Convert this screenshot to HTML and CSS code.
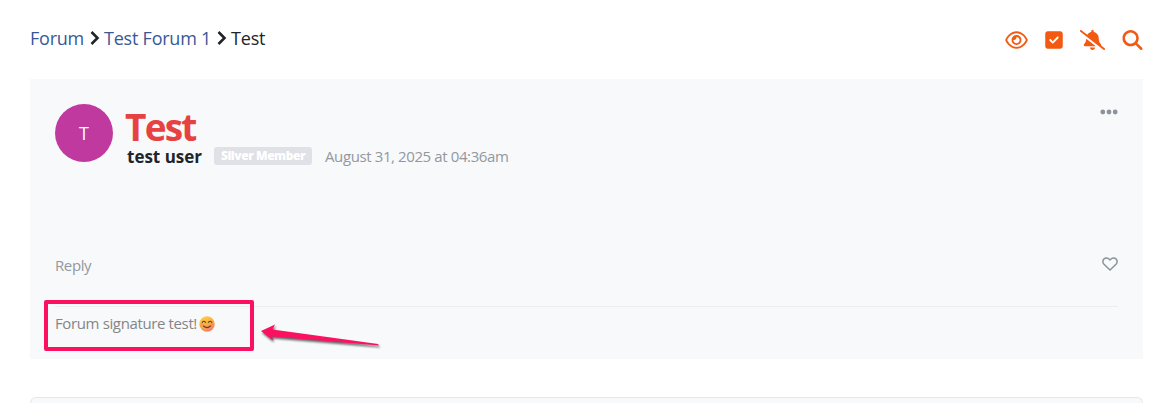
FILE: index.html
```html
<!DOCTYPE html>
<html lang="en">
<head>
<meta charset="utf-8">
<title>Test - Forum</title>
<link rel="stylesheet" href="styles.css">
</head>
<body>
<main class="page">
  <header class="topbar">
    <nav class="crumbs">
      <a class="crumb-forum" href="#">Forum</a>
      <svg class="chevron" viewBox="0 0 10 16"><path d="M1.500 2 7.500 8l-6 6"/></svg>
      <a class="crumb-sub" href="#">Test Forum 1</a>
      <svg class="chevron" viewBox="0 0 10 16"><path d="M1.500 2 7.500 8l-6 6"/></svg>
      <span class="crumb-current">Test</span>
    </nav>
    <div class="tools">
      <svg class="tool-eye" viewBox="0 0 576 512"><path fill="currentColor" d="M288 80c-65.200 0-118.800 29.600-159.900 67.700C89.600 183.500 63 226 49.400 256c13.600 30 40.200 72.500 78.600 108.300C169.200 402.400 222.800 432 288 432s118.800-29.600 159.900-67.700C486.400 328.500 513 286 526.600 256c-13.600-30-40.200-72.500-78.600-108.300C406.800 109.600 353.200 80 288 80zM95.400 112.600C142.500 68.800 207.200 32 288 32s145.500 36.800 192.600 80.600c46.800 43.500 78.100 95.400 93 131.100 3.300 7.900 3.300 16.700 0 24.600-14.900 35.700-46.200 87.700-93 131.100C433.500 443.200 368.800 480 288 480s-145.500-36.800-192.600-80.600C48.600 356 17.300 304 2.500 268.300c-3.300-7.900-3.300-16.700 0-24.600C17.300 208 48.600 156 95.400 112.600zM288 336c44.200 0 80-35.800 80-80s-35.800-80-80-80c-.7 0-1.300 0-2 0 1.300 5.100 2 10.500 2 16 0 35.300-28.700 64-64 64-5.500 0-10.900-.7-16-2 0 .7 0 1.300 0 2 0 44.200 35.800 80 80 80zm0-208a128 128 0 1 1 0 256 128 128 0 1 1 0-256z"/></svg>
      <svg class="tool-check" viewBox="0 0 448 512"><path fill="currentColor" d="M64 32C28.700 32 0 60.700 0 96v320c0 35.300 28.700 64 64 64h320c35.300 0 64-28.700 64-64V96c0-35.300-28.700-64-64-64H64zM337 209 209 337c-9.400 9.400-24.600 9.400-33.900 0l-64-64c-9.400-9.400-9.400-24.600 0-33.900s24.600-9.400 33.900 0l47 47L303 175c9.400-9.400 24.600-9.400 33.900 0s9.400 24.600 0 34z"/></svg>
      <svg class="tool-bell" viewBox="0 0 640 512"><path fill="currentColor" d="M38.800 5.100C28.400-3.100 13.300-1.200 5.100 9.200s-6.300 25.500 4.100 33.700l592 464c10.400 8.200 25.500 6.300 33.700-4.100s6.300-25.500-4.100-33.700l-90.200-70.700c.2-.4 .4-.9 .6-1.300 5.200-11.500 3.100-25-5.300-34.400l-7.400-8.300C497.300 319.200 480 273.800 480 226.800V208c0-77.400-55-142-128-156.800V32c0-17.700-14.300-32-32-32s-32 14.300-32 32v19.200c-42.600 8.600-79 34.200-102 69.300L38.800 5.100zM406.200 416 160 222.100v4.800c0 47-17.300 92.400-48.500 127.600l-7.400 8.300c-8.400 9.400-10.400 22.900-5.300 34.400S115.400 416 128 416h278.200zm-40.900 77.300c12-12 18.700-28.300 18.700-45.300H256c0 17 6.700 33.300 18.700 45.300S303 512 320 512s33.300-6.700 45.300-18.700z"/></svg>
      <svg class="tool-search" viewBox="0 0 512 512"><path fill="currentColor" d="M416 208c0 45.900-14.900 88.300-40 122.700l126.600 126.700c12.500 12.500 12.500 32.800 0 45.300s-32.800 12.500-45.300 0L330.700 376c-34.400 25.200-76.800 40-122.700 40C93.100 416 0 322.900 0 208S93.100 0 208 0s208 93.100 208 208zM208 352a144 144 0 1 0 0-288 144 144 0 1 0 0 288z"/></svg>
    </div>
  </header>

  <article class="post">
    <div class="post-head">
      <div class="avatar">T</div>
      <div class="post-info">
        <h1 class="title">Test</h1>
        <div class="meta">
          <strong class="author">test user</strong>
          <span class="badge">Silver Member</span>
          <time class="date">August 31, 2025 at 04:36am</time>
        </div>
      </div>
      <svg class="more" viewBox="0 0 18 6"><circle cx="2.800" cy="3" r="2.400"/><circle cx="9" cy="3" r="2.400"/><circle cx="15.200" cy="3" r="2.400"/></svg>
    </div>
    <div class="actions">
      <a class="reply" href="#">Reply</a>
      <svg class="heart" viewBox="0 0 16 14"><path d="M8 13 2 7.300C.4 5.700.5 3.200 2 1.900c1.600-1.500 3.900-1.200 5.300.3l.7.700.7-.7c1.400-1.500 3.700-1.800 5.300-.3 1.500 1.300 1.600 3.800 0 5.400z"/></svg>
    </div>
    <div class="signature">
      <span class="signature-text">Forum signature test!</span>
      <svg class="emoji" viewBox="0 0 16 16">
        <defs><linearGradient id="face" x1="0" y1="0" x2=".5" y2="1"><stop offset="0" stop-color="#ffd34e"/><stop offset=".6" stop-color="#fbae3c"/><stop offset="1" stop-color="#f3826b"/></linearGradient></defs>
        <circle cx="8" cy="8" r="7.700" fill="url(#face)"/>
        <circle cx="3" cy="9" r="2" fill="#ff8253" opacity=".5"/><circle cx="13" cy="9" r="2" fill="#ff8253" opacity=".5"/>
        <path d="M3.200 6.300q1.700-2 3.400 0M9.400 6.300q1.700-2 3.400 0M4.500 10q3.500 3.200 7 0" fill="none" stroke="#65402d" stroke-width="1.100" stroke-linecap="round"/>
      </svg>
    </div>
    <div class="callout-box"></div>
    <svg class="callout-arrow" viewBox="0 0 130 34"><path d="M1 13 15 6.500 12.500 11.500 118 26 119 27.500 12 18.500 13 22.500z"/></svg>
  </article>
  <section class="next-post"></section>
</main>
</body>
</html>
```
FILE: styles.css
```css
* { box-sizing: border-box; }
html, body { margin: 0; background: #fff; }
body { font-family: "Open Sans", "Noto Sans", sans-serif; color: #212529; }
a { color: #385898; text-decoration: none; }
svg { display: block; flex: none; }
.page { padding: 0 24px 0 30px; }
.topbar { display: flex; justify-content: space-between; height: 79px; }
.crumbs { display: flex; align-items: center; height: 76px; font-size: 18px; line-height: 26px; letter-spacing: -0.230px; white-space: nowrap; }
.crumb-current { color: #212529; }
.chevron { width: 10px; height: 16px; margin: 0 4px 0 6px; fill: none; stroke: #212529; stroke-width: 2.600; }
.tools { display: flex; align-items: center; height: 79px; color: #f45911; }
.tool-eye { width: 23px; height: 20px; margin-right: 17px; }
.tool-check { width: 18px; height: 20px; margin-right: 17px; }
.tool-bell { width: 25px; height: 20px; margin-right: 17px; }
.tool-search { width: 21px; height: 20px; }
.post { position: relative; height: 280px; padding: 25px 25px 0; background: #f8f9fb; }
.post-head { display: flex; height: 138px; }
.avatar { width: 58px; height: 58px; border-radius: 50%; background: #bf399e; color: #fff; font-size: 18px; line-height: 58px; text-align: center; }
.post-info { flex: 1; padding-left: 12px; }
.title { height: 43px; margin: 0; color: #e74242; font-size: 37px; line-height: 46px; font-weight: 700; letter-spacing: -1.800px; }
.meta { display: flex; align-items: center; height: 18px; padding-left: 1px; line-height: 18px; white-space: nowrap; }
.author { width: 88px; padding: 2px 0 0 1px; font-size: 17px; }
.badge { width: 98px; height: 18px; border-radius: 3px; background: #e0e0e7; color: #fff; font-size: 12px; line-height: 17px; font-weight: 800; letter-spacing: -0.450px; text-align: center; }
.date { margin-left: 13px; color: #92989e; font-size: 15px; letter-spacing: -0.390px; }
.more { width: 18px; height: 6px; margin-top: 5px; fill: #8c939b; }
.actions { display: flex; justify-content: space-between; height: 65px; border-bottom: 1px solid #eceef0; }
.reply { padding-top: 13px; color: #92989e; font-size: 15px; line-height: 20px; letter-spacing: -0.400px; }
.heart { width: 16px; height: 14px; margin-top: 15px; fill: none; stroke: #8b929a; stroke-width: 1.500; }
.signature { display: flex; align-items: center; height: 33px; color: #858585; font-size: 15px; letter-spacing: -0.370px; }
.signature-text { padding-bottom: 2px; }
.emoji { width: 16px; height: 16px; margin-left: 2px; }
.callout-box { position: absolute; left: 14px; top: 221px; width: 210px; height: 51px; border: 4px solid #fc1060; border-radius: 2px; }
.callout-arrow { position: absolute; left: 230px; top: 239px; width: 130px; height: 34px; fill: #fc1060; filter: drop-shadow(1px 2px 1px rgba(0, 0, 0, .6)); }
.next-post { height: 6px; margin-top: 38px; border: 1px solid #e6e7e9; border-bottom: 0; border-radius: 6px 6px 0 0; background: #f8f9fb; }
```
